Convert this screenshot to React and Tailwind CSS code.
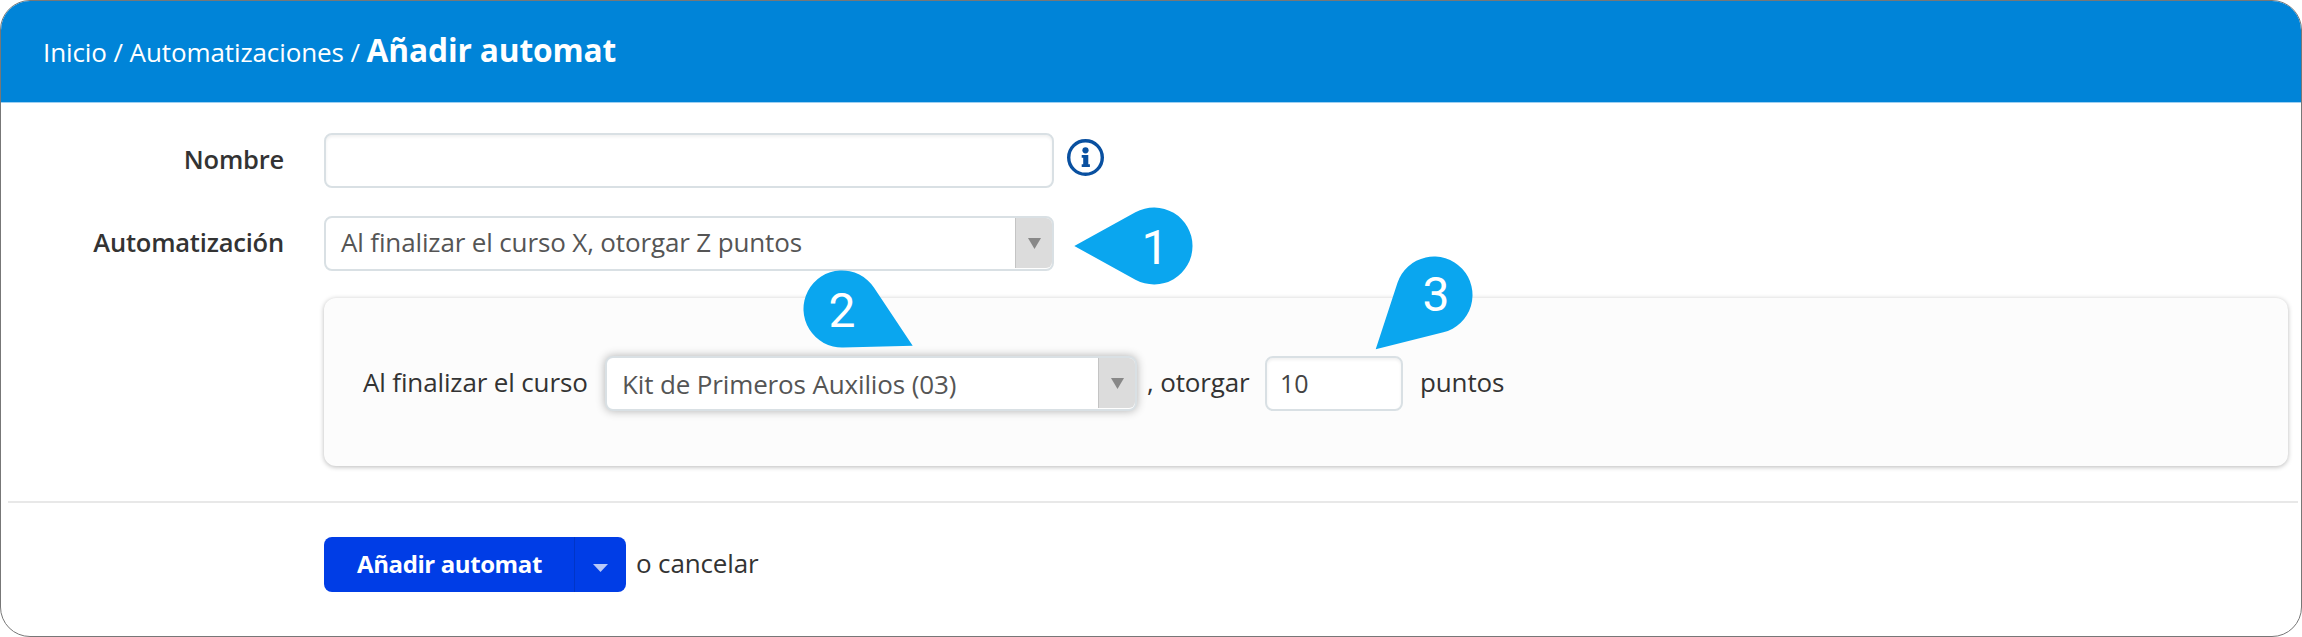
const Pin = ({ className, angle, label, dx = 0, dy = 0 }) => (
  <svg
    className={`absolute h-40 w-40 pointer-events-none ${className}`}
    viewBox="-80 -80 160 160"
  >
    <path
      d="M-79.7 0L-18.6 -33.7A38.5 38.5 0 1 1 -18.6 33.7Z"
      fill="#0aa6ef"
      transform={`rotate(${angle})`}
    />
    <text
      x={dx}
      y={17.5 + dy}
      textAnchor="middle"
      fill="#fff"
      className="font-['Roboto',sans-serif] text-[48px]"
    >
      {label}
    </text>
  </svg>
);

const Select = ({ className, children }) => (
  <div
    className={`flex h-[55px] rounded-lg border-2 border-[#d9e0e4] bg-white pl-[15px] text-[#555] ${className}`}
  >
    <span className="flex-1">{children}</span>
    <span className="flex w-[37px] items-center justify-center rounded-r-md border-l border-[#c4c4c4] bg-[#dcdcdc] mb-px">
      <svg className="h-[11px] w-[13px]" viewBox="0 0 13 11">
        <path d="M0 0H13L6.5 11Z" fill="#888" />
      </svg>
    </span>
  </div>
);

export default function App() {
  return (
    <div className="relative h-[637px] w-[2302px] overflow-hidden rounded-[30px] border border-[#777] bg-white font-['Open_Sans',sans-serif] text-[26px] tracking-[-0.14px] text-[#333]">
      <header className="flex h-[102px] items-baseline border-b border-[#9ed0f2] bg-[#0084d8] pl-[42px] pt-[27px] text-white">
        <span className="whitespace-pre tracking-[-0.1px]">
          Inicio / Automatizaciones /{" "}
        </span>
        <h1 className="text-[31.7px] leading-[44px] font-bold">Añadir automat</h1>
      </header>

      <main>
        <div className="flex items-center pt-[30px]">
          <label className="mb-[3px] w-[283px] text-right text-[25.5px] font-semibold tracking-[-0.2px]">Nombre</label>
          <div className="ml-10 h-[55px] w-[730px] rounded-lg border-2 border-[#d9e0e4] bg-white shadow-[inset_0_2px_3px_rgba(0,0,0,0.06)]" />
          <svg className="mb-[6px] ml-[13px] h-[37px] w-[37px]" viewBox="0 0 37 37">
            <circle cx="18.5" cy="18.5" r="16.8" fill="none" stroke="#0950a0" strokeWidth="3.4" />
            <circle cx="18.5" cy="11.3" r="3.1" fill="#0950a0" />
            <path d="M14.7 16H21.3V25.2H22.9V28H14.7V25.2H16.2V18.8H14.7Z" fill="#0950a0" />
          </svg>
        </div>

        <div className="mt-7 flex items-center">
          <label className="mb-[3px] w-[283px] text-right text-[25.5px] font-semibold tracking-[-0.2px]">Automatización</label>
          <Select className="ml-10 w-[730px] leading-[49px]">
            Al finalizar el curso X, otorgar Z puntos
          </Select>
        </div>

        <section className="mt-[27px] ml-[323px] flex h-[168px] w-[1964px] rounded-xl bg-[#fcfcfc] pl-[39px] pt-[58px] shadow-[0_1px_5px_rgba(0,0,0,0.28)]">
          <span className="w-[242px] leading-[52px]">Al finalizar el curso</span>
          <Select className="w-[532px] leading-[53px] shadow-[0_0_10px_rgba(0,0,0,0.3)]">
            Kit de Primeros Auxilios (03)
          </Select>
          <span className="w-[128px] pl-[10px] leading-[52px]">, otorgar</span>
          <div className="h-[55px] w-[138px] rounded-lg border-2 border-[#d9e0e4] bg-white pl-[13px] text-[25px] leading-[50px] font-medium text-[#444] shadow-[inset_0_2px_3px_rgba(0,0,0,0.06)]">
            10
          </div>
          <span className="pl-[17px] leading-[52px]">puntos</span>
        </section>

        <hr className="mt-[35px] mr-[3px] ml-[7px] border-t-2 border-[#e8e8e8]" />

        <div className="mt-[34px] ml-[323px] flex">
          <button className="flex h-[55px] w-[302px] rounded-lg bg-[#003de6] text-left font-bold text-white">
            <span className="w-[251px] border-r border-[#0035c8] pl-[33px] text-[24px] leading-[54px] tracking-[-0.4px]">
              Añadir automat
            </span>
            <svg className="mt-[27px] ml-[18px] h-2 w-[15px]" viewBox="0 0 15 8">
              <path d="M0 0H15L7.5 8Z" fill="#b8c8f8" />
            </svg>
          </button>
          <span className="pl-[10px] leading-[53px]">o cancelar</span>
        </div>
      </main>

      <Pin className="left-[1073px] top-[165px]" angle={0} label="1" dx={1} />
      <Pin className="left-[761px] top-[228px]" angle={-152.5} label="2" />
      <Pin className="left-[1353px] top-[214px]" angle={-43} label="3" dx={2} dy={-2} />
    </div>
  );
}
